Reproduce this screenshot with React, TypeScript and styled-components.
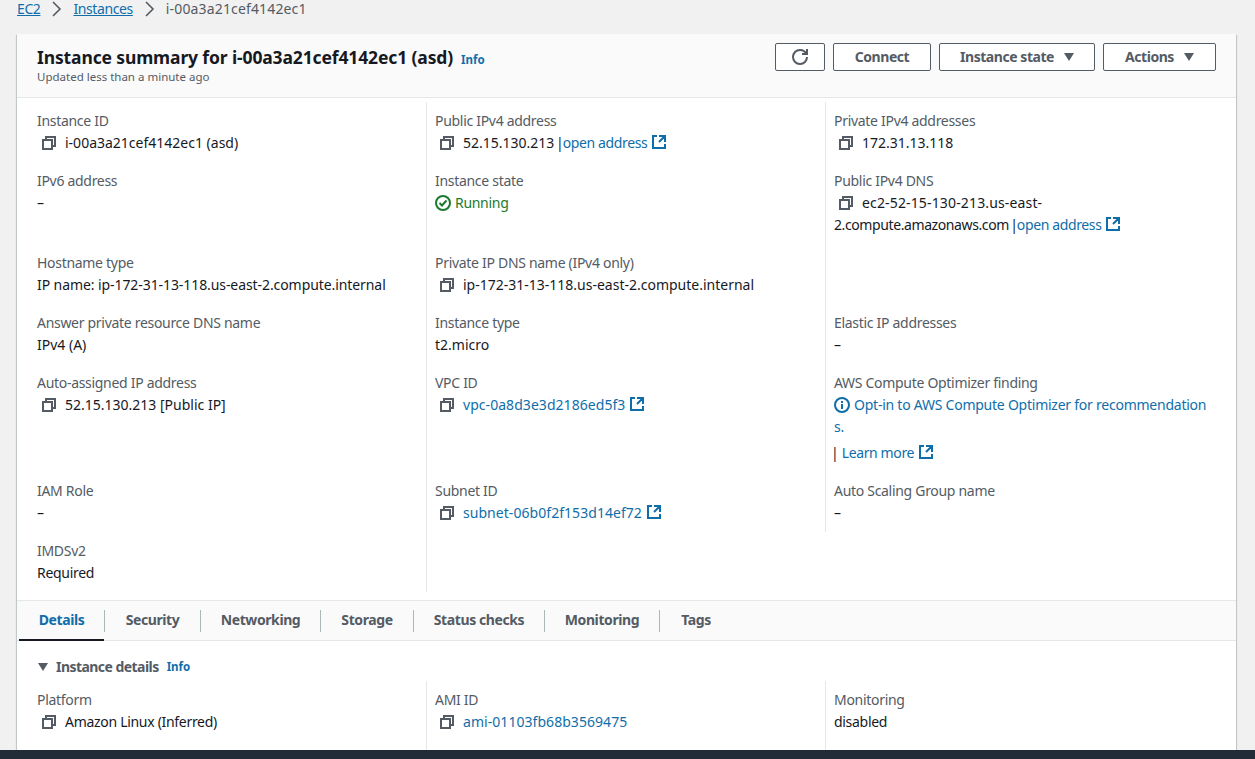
import React from "react";
import styled, { createGlobalStyle } from "styled-components";

const Global = createGlobalStyle`
  html, body { margin: 0; padding: 0; height: 100%; }
  body { font-family: "Noto Sans", "Open Sans", sans-serif; font-size: 14px; line-height: 22px; color: #16191f; background: #f1f1f1; }
  #root { height: 100%; }
`;

const Page = styled.div`
  height: 759px;
  display: flex;
  flex-direction: column;
  overflow: hidden;
`;
const Main = styled.main`
  flex: 1;
  min-height: 0;
  overflow: hidden;
  padding: 0 19px 0 17px;
`;
const FooterBar = styled.footer`
  height: 9px;
  background: #212c38;
`;
const Crumbs = styled.nav`
  height: 34px;
  display: flex;
  align-items: flex-start;
  line-height: 18px;
  color: #545b64;
`;
const CrumbLink = styled.a`
  color: #0f6eaa;
  text-decoration: underline;
  letter-spacing: -0.4px;
`;
const CrumbCurrent = styled.span`
  letter-spacing: 0.15px;
`;
const Chevron = styled.svg`
  width: 10px;
  height: 16px;
  margin: 1px 11px 0 12px;
  fill: none;
  stroke: #545b64;
  stroke-width: 1.6;
`;
const Card = styled.section`
  background: #fff;
  box-shadow: 0 1px 1px 0 rgba(0, 28, 36, 0.3), 1px 1px 1px 0 rgba(0, 28, 36, 0.15), -1px 1px 1px 0 rgba(0, 28, 36, 0.15);
`;
const Header = styled.header`
  height: 64px;
  box-sizing: border-box;
  padding: 9px 20px 0;
  display: flex;
  justify-content: space-between;
  align-items: flex-start;
  background: #fafafa;
  border-bottom: 1px solid #e6e8e8;
`;
const TitleBlock = styled.div`
  padding-top: 4px;
`;
const Title = styled.h1`
  margin: 0;
  font-size: 17.5px;
  line-height: 20px;
  font-weight: 700;
  letter-spacing: -0.13px;
  color: #16191f;
  display: flex;
  align-items: baseline;
  gap: 8px;
`;
const Info = styled.a`
  font-size: 11.5px;
  font-weight: 700;
  letter-spacing: 0;
  color: #0f6eaa;
`;
const Subtitle = styled.div`
  font-size: 11.5px;
  line-height: 13px;
  color: #545b64;
`;
const Actions = styled.div`
  display: flex;
  gap: 8px;
`;
const Button = styled.button<{ $w: number }>`
  width: ${(p) => p.$w}px;
  height: 28px;
  box-sizing: border-box;
  padding: 0;
  display: flex;
  align-items: center;
  justify-content: center;
  gap: 10px;
  background: #fff;
  border: 1px solid #545b64;
  border-radius: 2px;
  color: #545b64;
  font: 700 14px/20px "Noto Sans", sans-serif;
  letter-spacing: -0.45px;
`;
const Grid = styled.div<{ $pt: number; $pb: number; $minH?: number }>`
  display: grid;
  grid-template-columns: repeat(3, 399px);
  padding: ${(p) => p.$pt}px 12px ${(p) => p.$pb}px 10px;
  min-height: ${(p) => p.$minH ?? 0}px;
`;
const Cell = styled.div<{ $first?: boolean }>`
  padding: 8px 8px 8px ${(p) => (p.$first ? 9 : 8)}px;
  border-left: ${(p) => (p.$first ? "1px solid transparent" : "1px solid #e6e8e8")};
  min-width: 0;
`;
const Label = styled.div`
  color: #545b64;
  letter-spacing: -0.3px;
`;
const Value = styled.div<{ $ls?: number }>`
  color: #16191f;
  letter-spacing: ${(p) => p.$ls ?? 0}px;
`;
const Spaced = styled.span<{ $ls: number }>`
  letter-spacing: ${(p) => p.$ls}px;
`;
const Link = styled.a<{ $id?: boolean }>`
  color: #0f6eaa;
  letter-spacing: ${(p) => (p.$id ? "0.05px" : "-0.38px")};
`;
const OptIn = styled.a`
  color: #0f6eaa;
  letter-spacing: -0.24px;
`;
const LearnRow = styled.div`
  margin-top: 4px;
`;
const LearnPipe = styled.span`
  margin: 0 3px 0 -3px;
`;
const Pipe = styled.span`
  margin: 0 -1px 0 -2px;
`;
const Running = styled.div`
  display: flex;
  align-items: center;
  gap: 4px;
  color: #1a7a2e;
  letter-spacing: -0.3px;
`;
const IconBase = styled.svg`
  width: 16px;
  height: 16px;
  flex: none;
  fill: none;
  stroke: currentColor;
  stroke-width: 2;
`;
const CopySvg = styled(IconBase)`
  color: #545b64;
  margin: 0 8px 0 4px;
  vertical-align: -3px;
`;
const ExtSvg = styled(IconBase)`
  color: #0f6eaa;
  margin-left: 4px;
  vertical-align: -2px;
`;
const InfoSvg = styled(IconBase)`
  color: #0f6eaa;
  margin-right: 4px;
  vertical-align: -3px;
`;
const Caret = styled.svg`
  width: 10px;
  height: 8px;
  flex: none;
  fill: #545b64;
`;
const Tabs = styled.div`
  height: 41px;
  box-sizing: border-box;
  display: flex;
  align-items: stretch;
  padding-left: 2px;
  background: #fafafa;
  border-top: 1px solid #e6e8e8;
  border-bottom: 1px solid #e6e8e8;
`;
const Tab = styled.div<{ $active?: boolean; $w: number }>`
  width: ${(p) => p.$w}px;
  display: flex;
  align-items: center;
  justify-content: center;
  font-weight: 700;
  letter-spacing: -0.4px;
  margin-bottom: -1px;
  color: ${(p) => (p.$active ? "#0f6eaa" : "#545b64")};
  border-bottom: 2px solid ${(p) => (p.$active ? "#16191f" : "transparent")};
`;
const TabSep = styled.span`
  width: 1px;
  height: 22px;
  align-self: center;
  background: #aab7b8;
`;
const SectionHead = styled.div`
  display: flex;
  align-items: center;
  padding: 11px 20px 0 21px;
  height: 40px;
  box-sizing: border-box;
  font-weight: 700;
  color: #545b64;
`;
const SectionTitle = styled.span`
  margin: 0 8px 0 8px;
  letter-spacing: -0.55px;
`;

const Copy = () => (
  <CopySvg viewBox="0 0 16 16"><path d="M2 5h9v9H2z" /><path d="M5 5V2h9v9h-3" /></CopySvg>
);
const Ext = () => (
  <ExtSvg viewBox="0 0 16 16"><path d="M14 8.01v-6H8M14.02 2 8 8.03M6 2H2v12h12v-4" /></ExtSvg>
);
const Down = () => (
  <Caret viewBox="0 0 10 8"><path d="M0 0h10L5 8z" /></Caret>
);
const Chev = () => (
  <Chevron viewBox="0 0 10 16"><path d="M1 1l7 7-7 7" /></Chevron>
);

type Item = { label?: string; body?: React.ReactNode };

const copyVal = (n: React.ReactNode) => <Value><Copy />{n}</Value>;
const plain = (n: React.ReactNode) => <Value>{n}</Value>;
const tight = (n: React.ReactNode) => <Value $ls={-0.3}>{n}</Value>;
const ext = (t: string) => <><Link>{t}</Link><Ext /></>;
const extId = (t: string) => <><Link $id>{t}</Link><Ext /></>;

const items: Item[] = [
  { label: "Instance ID", body: copyVal("i-00a3a21cef4142ec1 (asd)") },
  { label: "Public IPv4 address", body: copyVal(<>52.15.130.213 <Pipe>|</Pipe>{ext("open address")}</>) },
  { label: "Private IPv4 addresses", body: copyVal("172.31.13.118") },
  { label: "IPv6 address", body: plain("–") },
  {
    label: "Instance state",
    body: (
      <Running>
        <IconBase viewBox="0 0 16 16"><circle cx="8" cy="8" r="7" /><path d="M4.5 8l2.5 2.5 4.5-5" /></IconBase>
        Running
      </Running>
    ),
  },
  {
    label: "Public IPv4 DNS",
    body: copyVal(
      <>
        <Spaced $ls={0.15}>ec2-52-15-130-213.us-east-</Spaced>
        <br />
        <Spaced $ls={-0.4}>2.compute.amazonaws.com </Spaced>
        <Pipe>|</Pipe>
        {ext("open address")}
      </>
    ),
  },
  { label: "Hostname type", body: <Value $ls={-0.08}>IP name: ip-172-31-13-118.us-east-2.compute.internal</Value> },
  { label: "Private IP DNS name (IPv4 only)", body: copyVal("ip-172-31-13-118.us-east-2.compute.internal") },
  {},
  { label: "Answer private resource DNS name", body: plain("IPv4 (A)") },
  { label: "Instance type", body: plain("t2.micro") },
  { label: "Elastic IP addresses", body: plain("–") },
  { label: "Auto-assigned IP address", body: copyVal("52.15.130.213 [Public IP]") },
  { label: "VPC ID", body: copyVal(extId("vpc-0a8d3e3d2186ed5f3")) },
  {
    label: "AWS Compute Optimizer finding",
    body: (
      <>
        <OptIn>
          <InfoSvg viewBox="0 0 16 16"><circle cx="8" cy="8" r="7" /><path d="M8 7v5M8 4v2" /></InfoSvg>
          Opt-in to AWS Compute Optimizer for recommendation<br />s.
        </OptIn>
        <LearnRow><LearnPipe>|</LearnPipe>{ext("Learn more")}</LearnRow>
      </>
    ),
  },
  { label: "IAM Role", body: plain("–") },
  { label: "Subnet ID", body: copyVal(extId("subnet-06b0f2f153d14ef72")) },
  { label: "Auto Scaling Group name", body: plain("–") },
  { label: "IMDSv2", body: tight("Required") },
  {},
];

const detailItems: Item[] = [
  { label: "Platform", body: <Value $ls={-0.3}><Copy />Amazon Linux (Inferred)</Value> },
  { label: "AMI ID", body: copyVal(<Link $id>ami-01103fb68b3569475</Link>) },
  { label: "Monitoring", body: tight("disabled") },
];

const Fields = ({ list, pt, pb, minH }: { list: Item[]; pt: number; pb: number; minH?: number }) => (
  <Grid $pt={pt} $pb={pb} $minH={minH}>
    {list.map((it, i) => (
      <Cell key={i} $first={i % 3 === 0}>
        {it.label && <Label>{it.label}</Label>}
        {it.body}
      </Cell>
    ))}
  </Grid>
);

const tabs = [
  { name: "Details", w: 85 },
  { name: "Security", w: 95 },
  { name: "Networking", w: 119 },
  { name: "Storage", w: 92 },
  { name: "Status checks", w: 130 },
  { name: "Monitoring", w: 114 },
  { name: "Tags", w: 72 },
];

export default function App() {
  return (
    <Page>
      <Global />
      <Main>
        <Crumbs>
          <CrumbLink>EC2</CrumbLink>
          <Chev />
          <CrumbLink>Instances</CrumbLink>
          <Chev />
          <CrumbCurrent>i-00a3a21cef4142ec1</CrumbCurrent>
        </Crumbs>
        <Card>
          <Header>
            <TitleBlock>
              <Title>Instance summary for i-00a3a21cef4142ec1 (asd) <Info>Info</Info></Title>
              <Subtitle>Updated less than a minute ago</Subtitle>
            </TitleBlock>
            <Actions>
              <Button $w={50}>
                <IconBase viewBox="0 0 16 16"><path d="M10 5h5V0" /><path d="M15 8a6.957 6.957 0 0 1-7 7 6.957 6.957 0 0 1-7-7 6.957 6.957 0 0 1 7-7 6.87 6.87 0 0 1 6.3 4" /></IconBase>
              </Button>
              <Button $w={98}>Connect</Button>
              <Button $w={156}>Instance state <Down /></Button>
              <Button $w={113}>Actions <Down /></Button>
            </Actions>
          </Header>
          <Fields list={items} pt={4} pb={8} />
          <Tabs>
            {tabs.map((t, i) => (
              <React.Fragment key={t.name}>
                {i > 0 && <TabSep />}
                <Tab $active={i === 0} $w={t.w}>{t.name}</Tab>
              </React.Fragment>
            ))}
          </Tabs>
          <SectionHead>
            <Down />
            <SectionTitle>Instance details</SectionTitle>
            <Info>Info</Info>
          </SectionHead>
          <Fields list={detailItems} pt={0} pb={0} minH={90} />
        </Card>
      </Main>
      <FooterBar />
    </Page>
  );
}
